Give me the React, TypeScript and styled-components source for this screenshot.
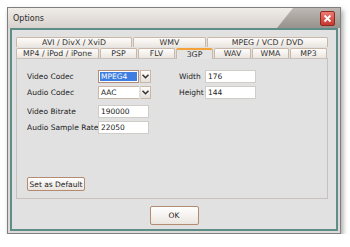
import React from "react";
import styled, { createGlobalStyle } from "styled-components";

const GlobalStyle = createGlobalStyle`
  html, body {
    margin: 0;
    padding: 0;
    background: #ffffff;
  }
  body {
    font-family: "DejaVu Sans", "Liberation Sans", sans-serif;
    font-size: 7.5px;
    color: #222;
  }
`;

const Page = styled.div`
  padding: 7px 0 0 7px;
`;

const Window = styled.div`
  width: 332px;
  height: 225px;
  border: 1px solid #7f7f7f;
  background: #dcd9d6;
  box-shadow: 2px 3px 5px rgba(0, 0, 0, 0.35);
  display: flex;
  flex-direction: column;
`;

const TitleBar = styled.div`
  height: 20px;
  display: flex;
  align-items: stretch;
  background: linear-gradient(#f0ece8, #d7d2cd);
`;

const Title = styled.div`
  flex: 1;
  display: flex;
  align-items: center;
  padding-left: 5px;
  font-size: 8px;
  color: #2a2a2a;
`;

const TitleCap = styled.div`
  width: 58px;
  display: flex;
  align-items: center;
  justify-content: flex-end;
  padding-right: 5px;
  background: linear-gradient(#bdb8b3, #98928c);
  clip-path: polygon(16px 0, 100% 0, 100% 100%, 0 100%);
`;

const CloseButton = styled.div`
  width: 13px;
  height: 13px;
  border: 1px solid #8e2a24;
  border-radius: 2px;
  background: linear-gradient(#ec7a70, #c8372e);
  display: flex;
  align-items: center;
  justify-content: center;
`;

const Frame = styled.div`
  flex: 1;
  display: flex;
  padding: 0 2px 2px;
`;

const Client = styled.div`
  flex: 1;
  border: 2px solid #5e8e87;
  background: #e1e1e1;
  padding: 7px 7px 4px 4px;
  display: flex;
  flex-direction: column;
`;

const TabRow = styled.div<{ $last?: boolean }>`
  display: flex;
  gap: 1px;
  margin-bottom: ${(p) => (p.$last ? 0 : 1)}px;
`;

const Tab = styled.div<{ $w: number; $active?: boolean }>`
  width: ${(p) => p.$w}px;
  height: ${(p) => (p.$active ? "11px" : "10px")};
  box-sizing: border-box;
  border: 1px solid #c9b8a8;
  border-bottom: none;
  border-top: ${(p) => (p.$active ? "2px solid #f4a23a" : "1px solid #c9b8a8")};
  border-radius: 2px 2px 0 0;
  background: ${(p) =>
    p.$active ? "#e4e4e4" : "linear-gradient(#fdfcfb, #ebe5df)"};
  display: flex;
  align-items: center;
  justify-content: center;
  font-size: 7.8px;
  color: #333;
  line-height: 1;
  position: relative;
  z-index: ${(p) => (p.$active ? 1 : 0)};
  margin-bottom: ${(p) => (p.$active ? "-1px" : "0")};
`;

const Panel = styled.div`
  width: 312px;
  height: 141px;
  box-sizing: border-box;
  border: 1px solid #c6c1bc;
  background: #e1e1e1;
  padding: 11px 10px 7px;
  display: flex;
  flex-direction: column;
`;

const Form = styled.div`
  display: flex;
  gap: 28px;
`;

const Group = styled.div`
  display: flex;
  flex-direction: column;
  gap: 3px;
  margin-bottom: 6px;
`;

const Row = styled.div<{ $labelW: number; $right?: boolean }>`
  display: grid;
  grid-template-columns: ${(p) => p.$labelW}px auto;
  column-gap: ${(p) => (p.$right ? 7 : 0)}px;
  align-items: center;
  height: 13px;
`;

const Label = styled.div<{ $right?: boolean }>`
  text-align: ${(p) => (p.$right ? "right" : "left")};
  white-space: nowrap;
  color: #222;
`;

const Field = styled.div<{ $w: number }>`
  width: ${(p) => p.$w}px;
  height: 13px;
  box-sizing: border-box;
  background: #fff;
  border: 1px solid #d0ccc8;
  padding-left: 2px;
  display: flex;
  align-items: center;
  color: #222;
`;

const SelectBox = styled.div<{ $w: number }>`
  width: ${(p) => p.$w}px;
  height: 13px;
  box-sizing: border-box;
  display: flex;
  gap: 1px;
`;

const SelectField = styled.div<{ $focus?: boolean; $joined?: boolean }>`
  flex: 1;
  box-sizing: border-box;
  background: #fff;
  border: 1px solid ${(p) => (p.$focus ? "#b08e78" : "#c9b8a8")};
  display: flex;
  align-items: center;
  padding: 1px;
  ${(p) => (p.$joined ? "border-right: none;" : "")}
`;

const SelectText = styled.span<{ $focus?: boolean }>`
  flex: 1;
  height: 100%;
  display: flex;
  align-items: center;
  padding-left: 1px;
  background: ${(p) => (p.$focus ? "#3d7ee0" : "transparent")};
  color: ${(p) => (p.$focus ? "#fff" : "#222")};
`;

const ArrowBtn = styled.div<{ $joined?: boolean }>`
  width: 11px;
  box-sizing: border-box;
  border: 1px solid #c9b8a8;
  ${(p) => (p.$joined ? "border-left: 1px solid #ddd;" : "")}
  background: linear-gradient(#fdfcfb, #e6e0da);
  display: flex;
  align-items: center;
  justify-content: center;
`;

const Spacer = styled.div`
  flex: 1;
`;

const Button = styled.div<{ $w: number; $h: number }>`
  width: ${(p) => p.$w}px;
  height: ${(p) => p.$h}px;
  box-sizing: border-box;
  border: 1px solid #b28b70;
  border-radius: 2px;
  background: linear-gradient(#ffffff, #ebe5df);
  display: flex;
  align-items: center;
  justify-content: center;
  color: #222;
  font-size: 7.5px;
`;

const Footer = styled.div`
  display: flex;
  justify-content: center;
  padding-top: 7px;
  padding-left: 3px;
`;

const Chevron = () => (
  <svg width="7" height="5" viewBox="0 0 7 5">
    <path d="M0.5 0.8 L3.5 3.8 L6.5 0.8" stroke="#333" strokeWidth="1.5" fill="none" />
  </svg>
);

const Select = ({ value, w, focus }: { value: string; w: number; focus?: boolean }) => (
  <SelectBox $w={w}>
    <SelectField $focus={focus} $joined={!focus}>
      <SelectText $focus={focus}>{value}</SelectText>
    </SelectField>
    <ArrowBtn $joined={!focus}>
      <Chevron />
    </ArrowBtn>
  </SelectBox>
);

const row1 = [
  { name: "AVI / DivX / XviD", w: 116 },
  { name: "WMV", w: 73 },
  { name: "MPEG / VCD / DVD", w: 121 },
];

const row2 = [
  { name: "MP4 / iPod / iPone", w: 83 },
  { name: "PSP", w: 37 },
  { name: "FLV", w: 37 },
  { name: "3GP", w: 37, active: true },
  { name: "WAV", w: 37 },
  { name: "WMA", w: 37 },
  { name: "MP3", w: 37 },
];

export default function App() {
  return (
    <Page>
      <GlobalStyle />
      <Window>
        <TitleBar>
          <Title>Options</Title>
          <TitleCap>
            <CloseButton>
              <svg width="9" height="9" viewBox="0 0 9 9">
                <path d="M1.5 1.5 L7.5 7.5 M7.5 1.5 L1.5 7.5" stroke="#fff" strokeWidth="1.8" />
              </svg>
            </CloseButton>
          </TitleCap>
        </TitleBar>
        <Frame>
          <Client>
            <TabRow>
              {row1.map((t) => (
                <Tab key={t.name} $w={t.w}>
                  {t.name}
                </Tab>
              ))}
            </TabRow>
            <TabRow $last>
              {row2.map((t) => (
                <Tab key={t.name} $w={t.w} $active={t.active}>
                  {t.name}
                </Tab>
              ))}
            </TabRow>
            <Panel>
              <Form>
                <div>
                  <Group>
                    <Row $labelW={71}>
                      <Label>Video Codec</Label>
                      <Select value="MPEG4" w={53} focus />
                    </Row>
                    <Row $labelW={71}>
                      <Label>Audio Codec</Label>
                      <Select value="AAC" w={53} />
                    </Row>
                  </Group>
                  <Group>
                    <Row $labelW={71}>
                      <Label>Video Bitrate</Label>
                      <Field $w={51}>190000</Field>
                    </Row>
                    <Row $labelW={71}>
                      <Label>Audio Sample Rate</Label>
                      <Field $w={51}>22050</Field>
                    </Row>
                  </Group>
                </div>
                <Group>
                  <Row $labelW={19} $right>
                    <Label $right>Width</Label>
                    <Field $w={51}>176</Field>
                  </Row>
                  <Row $labelW={19} $right>
                    <Label $right>Height</Label>
                    <Field $w={51}>144</Field>
                  </Row>
                </Group>
              </Form>
              <Spacer />
              <Button $w={58} $h={14}>Set as Default</Button>
            </Panel>
            <Footer>
              <Button $w={49} $h={19}>OK</Button>
            </Footer>
          </Client>
        </Frame>
      </Window>
    </Page>
  );
}
